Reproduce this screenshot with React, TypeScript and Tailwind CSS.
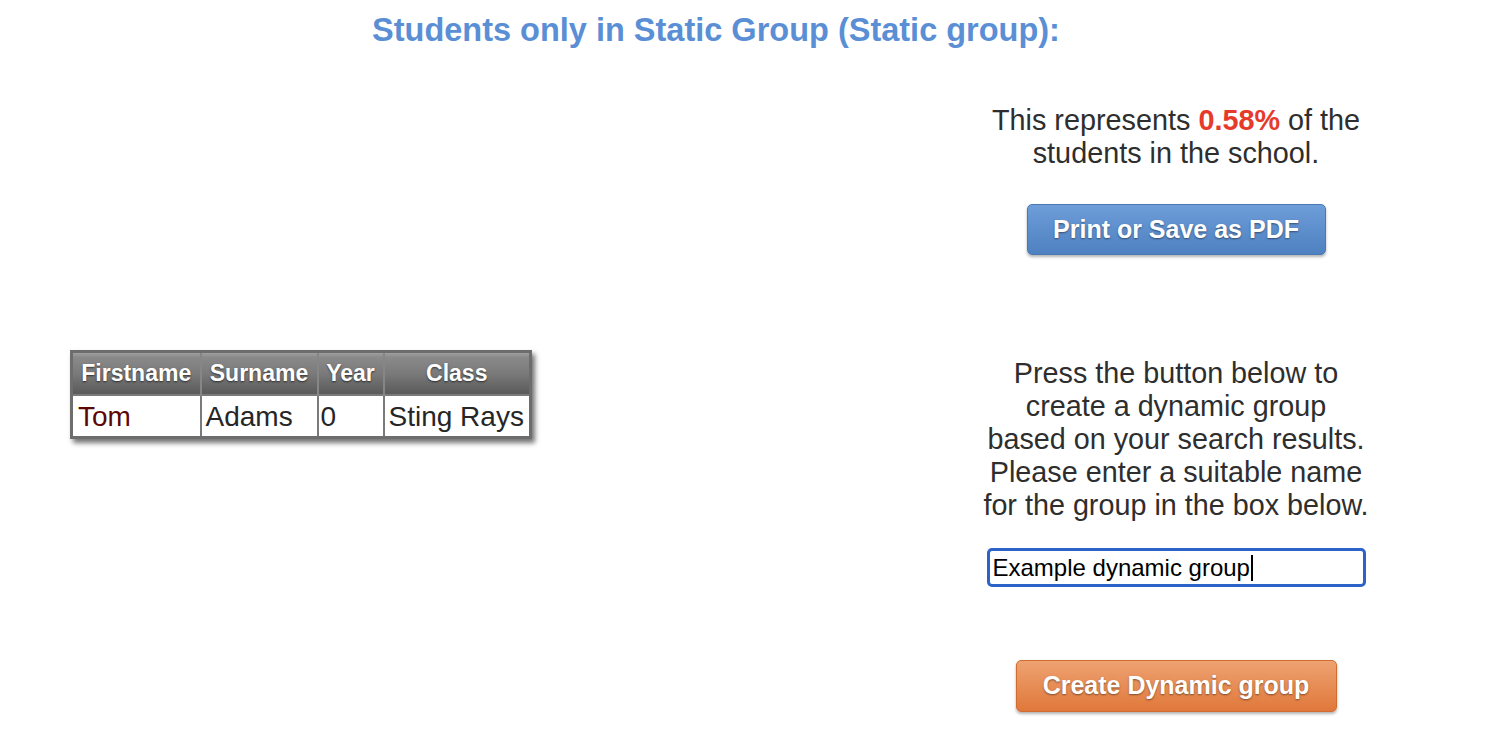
import React from "react";

const rows = [{ first: "Tom", last: "Adams", year: "0", cls: "Sting Rays" }];

export default function App() {
  return (
    <div className="w-[1498px] h-[738px] bg-white font-['Liberation_Sans',Arial,sans-serif] overflow-hidden">
      <div className="w-[1432px]">
        {/* Title */}
        <div className="h-[60px] flex items-center justify-center">
          <h1 className="text-[32.5px] leading-[37px] font-bold text-[#5b8fd5]">
            Students only in Static Group (Static group):
          </h1>
        </div>

        <div className="flex">
          {/* Left column: results table */}
          <div className="flex-1 pl-[70px] pt-[290px]">
            <table className="border-collapse border-[3px] border-[#6d6d6d] shadow-[3px_4px_5px_rgba(0,0,0,0.55)]">
              <thead>
                <tr className="h-[43px] bg-[linear-gradient(to_bottom,#a4a4a4_0%,#8a8a8a_12%,#7a7a7a_50%,#626262_85%,#5a5a5a_100%)]">
                  <th className="w-[129px] border-x-2 border-[#868686] text-white text-[23px] font-bold text-center [text-shadow:0_1px_2px_rgba(0,0,0,0.6)]">
                    Firstname
                  </th>
                  <th className="w-[117px] border-x-2 border-[#868686] text-white text-[23px] font-bold text-center [text-shadow:0_1px_2px_rgba(0,0,0,0.6)]">
                    Surname
                  </th>
                  <th className="w-[66px] border-x-2 border-[#868686] text-white text-[23px] font-bold text-center [text-shadow:0_1px_2px_rgba(0,0,0,0.6)]">
                    Year
                  </th>
                  <th className="w-[147px] border-x-2 border-[#868686] text-white text-[23px] font-bold text-center [text-shadow:0_1px_2px_rgba(0,0,0,0.6)]">
                    Class
                  </th>
                </tr>
              </thead>
              <tbody>
                {rows.map((r) => (
                  <tr key={r.first} className="h-[43px] bg-white">
                    <td className="border-2 border-[#7a7a7a] pl-[5px] pt-[3px] text-[28px] leading-[32px] text-[#5c0606]">{r.first}</td>
                    <td className="border-2 border-[#7a7a7a] pl-[4px] pt-[3px] text-[28px] leading-[32px] text-[#262626]">{r.last}</td>
                    <td className="border-2 border-[#7a7a7a] pl-[2px] pt-[3px] text-[28px] leading-[32px] text-[#262626]">{r.year}</td>
                    <td className="border-2 border-[#7a7a7a] pl-[4px] pt-[3px] text-[28px] leading-[32px] text-[#262626]">{r.cls}</td>
                  </tr>
                ))}
              </tbody>
            </table>
          </div>

          {/* Right column */}
          <div className="w-[512px] flex flex-col items-center text-[#2e2e2e]">
            <div className="mt-[44px] h-[66px] whitespace-nowrap text-[28.8px] leading-[33px] text-center">
              <div>
                This represents <span className="font-bold text-[#e63a2b]">0.58%</span> of the
              </div>
              <div>students in the school.</div>
            </div>

            <button className="mt-[34px] w-[299px] h-[51px] rounded-[5px] bg-[linear-gradient(to_bottom,#6d9ed9,#4f80c0)] border border-[#4a78b5] text-white text-[25px] font-bold [text-shadow:0_1px_2px_rgba(0,0,0,0.45)] shadow-[0_2px_3px_rgba(0,0,0,0.3)]">
              Print or Save as PDF
            </button>

            <div className="mt-[102px] h-[165px] whitespace-nowrap text-[28.75px] leading-[33px] text-center">
              <div>Press the button below to</div>
              <div>create a dynamic group</div>
              <div>based on your search results.</div>
              <div>Please enter a suitable name</div>
              <div>for the group in the box below.</div>
            </div>

            <div className="mt-[26px] w-[379px] h-[39px] rounded-[5px] border-[3px] border-[#2d62c8] flex items-center pl-[3px]">
              <span className="text-[24px] leading-[28px] text-black">Example dynamic group</span>
              <span className="w-[2px] h-[26px] bg-black ml-[1px]" />
            </div>

            <button className="mt-[73px] w-[321px] h-[52px] rounded-[5px] bg-[linear-gradient(to_bottom,#eea272,#e0783a)] border border-[#d06c30] text-white text-[25px] font-bold [text-shadow:0_1px_2px_rgba(0,0,0,0.45)] shadow-[0_2px_3px_rgba(0,0,0,0.3)]">
              Create Dynamic group
            </button>
          </div>
        </div>
      </div>
    </div>
  );
}
